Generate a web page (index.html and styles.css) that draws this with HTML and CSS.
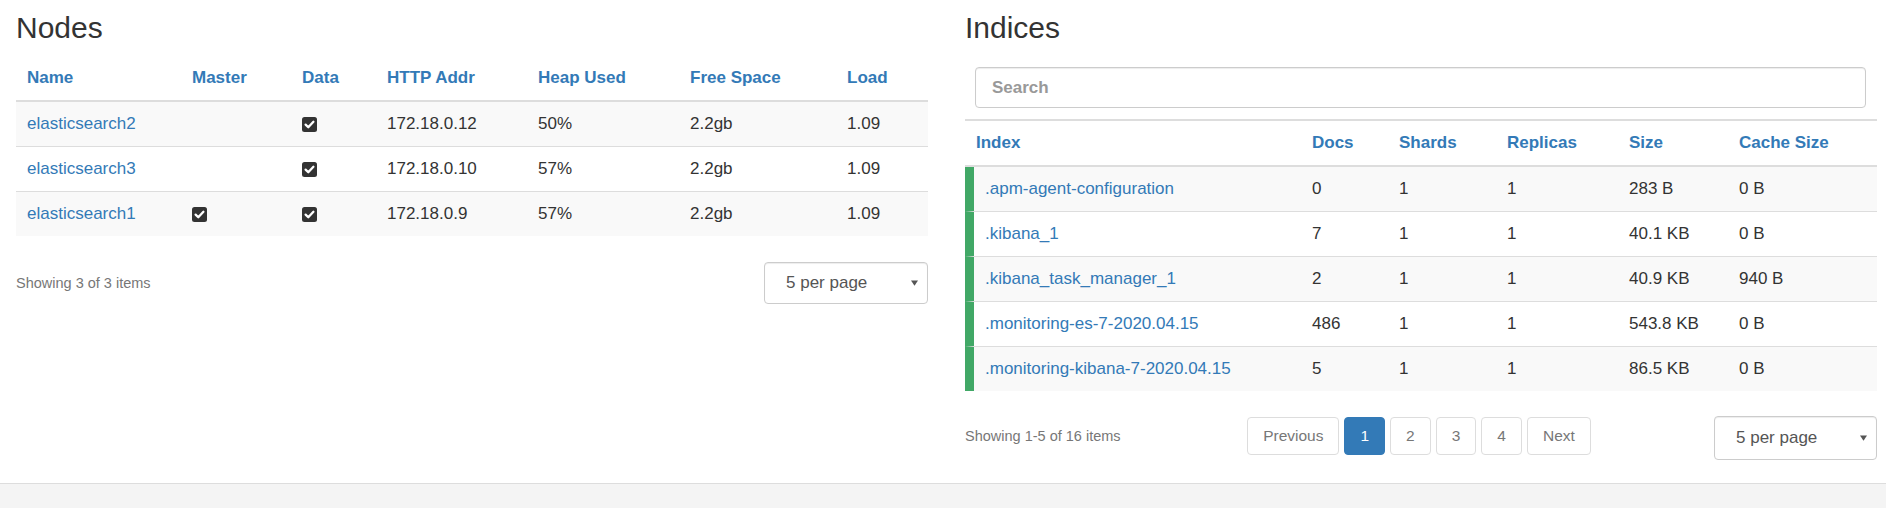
FILE: index.html
```html
<!DOCTYPE html>
<html>
<head>
<meta charset="utf-8">
<link rel="stylesheet" href="styles.css">
</head>
<body>
<div class="page">
  <section class="panel">
    <h3 class="title">Nodes</h3>
    <table class="tbl nodes">
      <colgroup>
        <col style="width:166px"><col style="width:110px"><col style="width:85px"><col style="width:151px"><col style="width:152px"><col style="width:157px"><col style="width:91px">
      </colgroup>
      <thead>
        <tr><th>Name</th><th>Master</th><th>Data</th><th>HTTP Addr</th><th>Heap Used</th><th>Free Space</th><th>Load</th></tr>
      </thead>
      <tbody>
        <tr class="odd"><td><a>elasticsearch2</a></td><td></td><td><svg class="chk" viewBox="0 0 15 15"><rect width="15" height="15" rx="2.5" fill="#333"/><path d="M3.6 7.6 L6.3 10.3 L11.4 4.8" fill="none" stroke="#fff" stroke-width="2.3" stroke-linecap="round" stroke-linejoin="round"/></svg></td><td>172.18.0.12</td><td>50%</td><td>2.2gb</td><td>1.09</td></tr>
        <tr><td><a>elasticsearch3</a></td><td></td><td><svg class="chk" viewBox="0 0 15 15"><rect width="15" height="15" rx="2.5" fill="#333"/><path d="M3.6 7.6 L6.3 10.3 L11.4 4.8" fill="none" stroke="#fff" stroke-width="2.3" stroke-linecap="round" stroke-linejoin="round"/></svg></td><td>172.18.0.10</td><td>57%</td><td>2.2gb</td><td>1.09</td></tr>
        <tr class="odd"><td><a>elasticsearch1</a></td><td><svg class="chk" viewBox="0 0 15 15"><rect width="15" height="15" rx="2.5" fill="#333"/><path d="M3.6 7.6 L6.3 10.3 L11.4 4.8" fill="none" stroke="#fff" stroke-width="2.3" stroke-linecap="round" stroke-linejoin="round"/></svg></td><td><svg class="chk" viewBox="0 0 15 15"><rect width="15" height="15" rx="2.5" fill="#333"/><path d="M3.6 7.6 L6.3 10.3 L11.4 4.8" fill="none" stroke="#fff" stroke-width="2.3" stroke-linecap="round" stroke-linejoin="round"/></svg></td><td>172.18.0.9</td><td>57%</td><td>2.2gb</td><td>1.09</td></tr>
      </tbody>
    </table>
    <div class="foot foot-nodes">
      <span class="showing">Showing 3 of 3 items</span>
      <div class="select"><span>5 per page</span><svg class="caret" viewBox="0 0 8 6"><path d="M0 0 H8 L4 6 Z" fill="#555"/></svg></div>
    </div>
  </section>

  <section class="panel">
    <h3 class="title">Indices</h3>
    <input class="search" type="text" placeholder="Search">
    <table class="tbl indices">
      <colgroup>
        <col style="width:337px"><col style="width:87px"><col style="width:108px"><col style="width:122px"><col style="width:110px"><col style="width:148px">
      </colgroup>
      <thead>
        <tr><th>Index</th><th>Docs</th><th>Shards</th><th>Replicas</th><th>Size</th><th>Cache Size</th></tr>
      </thead>
      <tbody>
        <tr class="odd"><td class="idx"><a>.apm-agent-configuration</a></td><td>0</td><td>1</td><td>1</td><td>283 B</td><td>0 B</td></tr>
        <tr><td class="idx"><a>.kibana_1</a></td><td>7</td><td>1</td><td>1</td><td>40.1 KB</td><td>0 B</td></tr>
        <tr class="odd"><td class="idx"><a>.kibana_task_manager_1</a></td><td>2</td><td>1</td><td>1</td><td>40.9 KB</td><td>940 B</td></tr>
        <tr><td class="idx"><a>.monitoring-es-7-2020.04.15</a></td><td>486</td><td>1</td><td>1</td><td>543.8 KB</td><td>0 B</td></tr>
        <tr class="odd"><td class="idx"><a>.monitoring-kibana-7-2020.04.15</a></td><td>5</td><td>1</td><td>1</td><td>86.5 KB</td><td>0 B</td></tr>
      </tbody>
    </table>
    <div class="foot foot-indices">
      <span class="showing">Showing 1-5 of 16 items</span>
      <ul class="pager">
        <li>Previous</li>
        <li class="active">1</li>
        <li>2</li>
        <li>3</li>
        <li>4</li>
        <li>Next</li>
      </ul>
      <div class="select"><span>5 per page</span><svg class="caret" viewBox="0 0 8 6"><path d="M0 0 H8 L4 6 Z" fill="#555"/></svg></div>
    </div>
  </section>
</div>
<footer class="bottom"></footer>
</body>
</html>
```

FILE: styles.css
```css
html, body {
  margin: 0;
  padding: 0;
  background: #fff;
}
body {
  font-family: "Liberation Sans", Arial, sans-serif;
  font-size: 17px;
  color: #333;
  height: 508px;
  display: flex;
  flex-direction: column;
}
.page {
  display: grid;
  grid-template-columns: 912px 912px;
  column-gap: 37px;
  padding: 0 9px 0 16px;
  height: 483px;
  box-sizing: border-box;
}
.panel {
  display: flex;
  flex-direction: column;
  min-width: 0;
}
.title {
  margin: 10px 0 0 0;
  font-size: 30px;
  line-height: 36px;
  font-weight: normal;
  color: #333;
}
.nodes {
  margin-top: 10px;
}
.tbl {
  border-collapse: separate;
  border-spacing: 0;
  table-layout: fixed;
  width: 912px;
}
.tbl th {
  text-align: left;
  color: #337ab7;
  font-weight: bold;
  font-size: 17px;
  line-height: 24px;
  padding: 10px;
  border-bottom: 2px solid #ddd;
}
.tbl td {
  font-size: 17px;
  line-height: 24px;
  padding: 10px;
  border-top: 1px solid #ddd;
  vertical-align: middle;
}
.tbl tbody tr:first-child td {
  border-top: 0;
}
.tbl tr.odd td {
  background: #f9f9f9;
}
.tbl a {
  color: #337ab7;
  text-decoration: none;
}
.nodes th:first-child,
.nodes td:first-child {
  padding-left: 11px;
}
.chk {
  display: block;
  width: 15px;
  height: 15px;
}
.search {
  margin: 21px 11px 11px 10px;
  height: 41px;
  box-sizing: border-box;
  border: 1px solid #ccc;
  border-radius: 4px;
  padding: 0 16px;
  font-family: "Liberation Sans", Arial, sans-serif;
  font-size: 17px;
  outline: none;
  box-shadow: inset 0 1px 1px rgba(0,0,0,0.075);
}
.search::placeholder {
  color: #999;
  font-weight: bold;
}
.indices thead th {
  border-top: 2px solid #ddd;
}
.indices th:first-child {
  padding-left: 11px;
}
.indices td.idx {
  border-left: 9px solid #41a866;
  padding-left: 11px;
}
.foot {
  margin-top: 26px;
  display: flex;
  align-items: center;
  justify-content: space-between;
}
.foot-indices {
  display: grid;
  grid-template-columns: 1fr auto 1fr;
  align-items: start;
  margin-top: 25px;
}
.foot-indices .showing {
  line-height: 40px;
}
.foot-indices .pager {
  margin-top: 1px;
  margin-left: -4px;
}
.foot-indices .select {
  justify-self: end;
}
.showing {
  font-size: 14.5px;
  color: #777;
}
.select {
  width: 164px;
  height: 42px;
  box-sizing: border-box;
  border: 1px solid #ccc;
  border-radius: 4px;
  display: flex;
  align-items: center;
  justify-content: space-between;
  padding: 0 9px 0 21px;
  font-size: 17px;
  color: #555;
  box-shadow: inset 0 1px 1px rgba(0,0,0,0.075);
}
.foot-indices .select {
  height: 44px;
  width: 163px;
}
.caret {
  width: 7px;
  height: 6px;
}
.pager {
  list-style: none;
  margin: 0;
  padding: 0;
  display: flex;
  gap: 5px;
}
.pager li {
  height: 38px;
  box-sizing: border-box;
  border: 1px solid #ddd;
  border-radius: 4px;
  padding: 0 15px;
  display: flex;
  align-items: center;
  font-size: 15.5px;
  color: #777;
}
.pager li.active {
  background: #337ab7;
  border-color: #337ab7;
  color: #fff;
}
.bottom {
  flex: 1;
  border-top: 1px solid #ddd;
  background: #f4f4f4;
}
```
